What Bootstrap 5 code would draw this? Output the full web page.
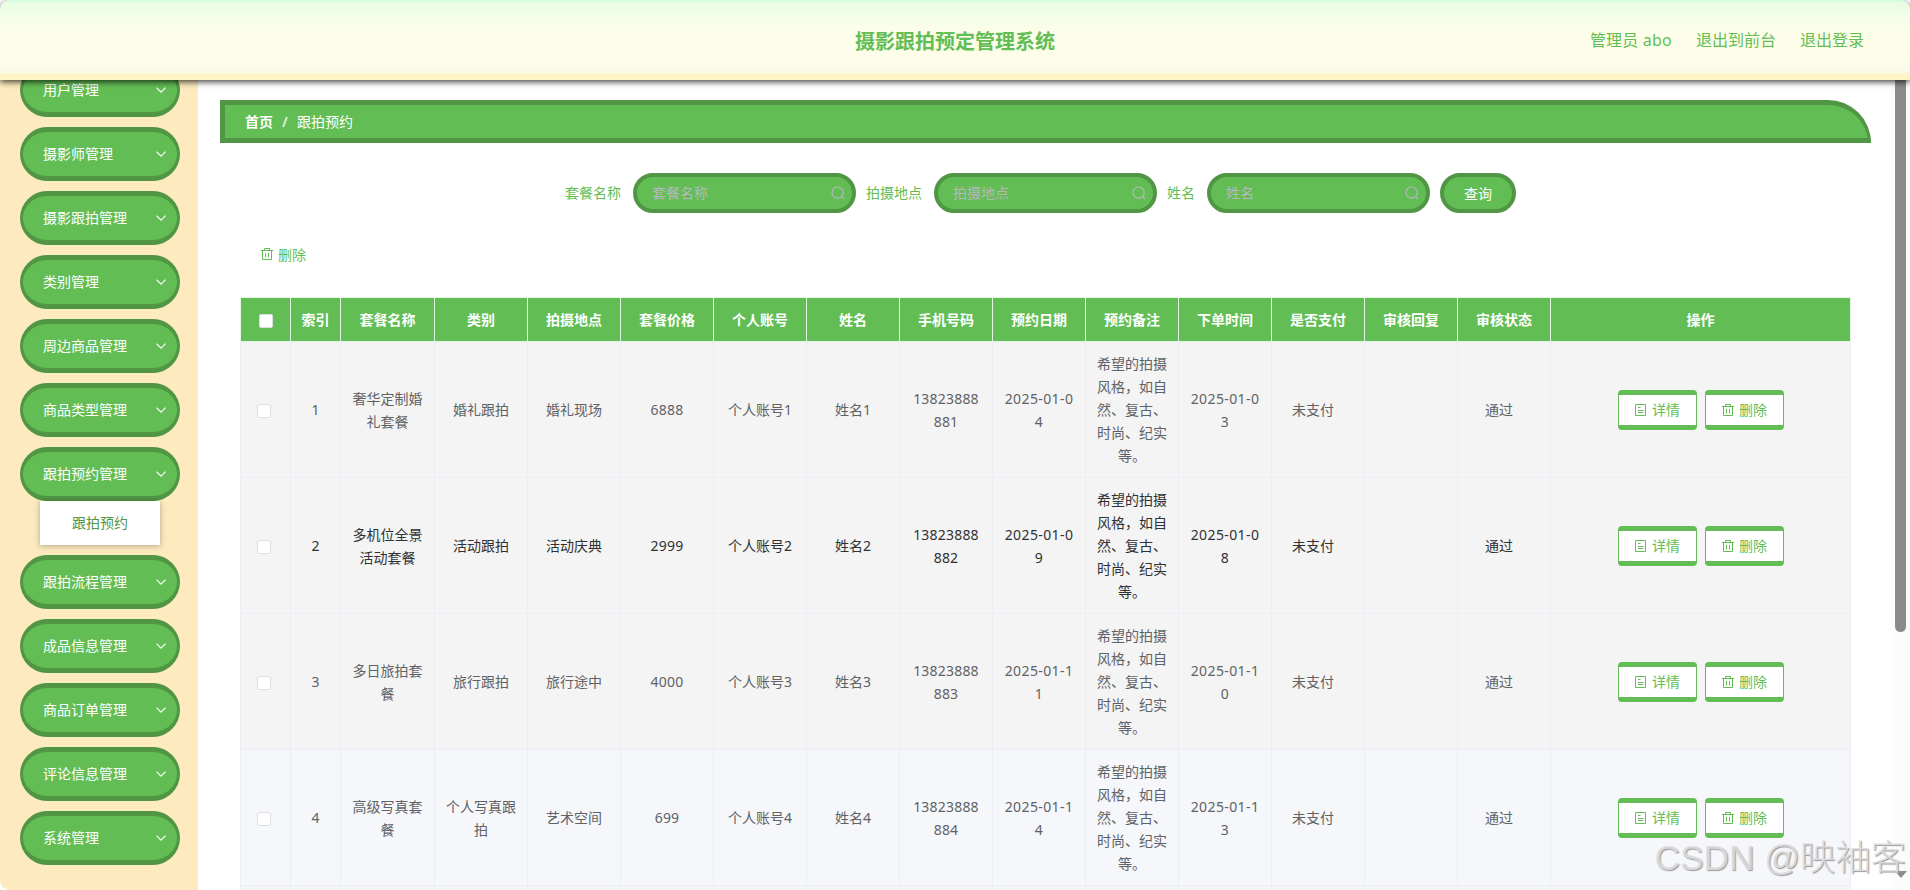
<!DOCTYPE html>
<html lang="zh-CN">
<head>
<meta charset="utf-8">
<title>摄影跟拍预定管理系统</title>
<link href="https://cdn.jsdelivr.net/npm/bootstrap@5.3.0/dist/css/bootstrap.min.css" rel="stylesheet">
<style>
:root{--g:#62be54;--d:#509644}
body{font:14px/1.5 "Noto Sans","Noto Sans CJK SC",sans-serif;color:#606266;height:890px;overflow:hidden;background:#fff}
.topbar{height:80px;z-index:5;border-bottom:7px solid #fdf5c6;border-radius:10px 10px 0 0;background:linear-gradient(#cffbdc 0,#e8fde2 3px,#f2fee8 14px,#fdfeea 32px,#fdfdea 62px,#f8fae9 73px);box-shadow:0 2px 6px rgba(0,0,0,.75);color:var(--g);font-size:16px;padding:5px 45px 0}
.topbar h1{font-size:20px;line-height:73px;font-weight:700}
.userlinks{gap:24px;top:0;right:46px;height:80px}
.userlinks .who{letter-spacing:.2px}
.side{width:198px;background:#fdeabf;padding:0 18px 0 20px;margin-top:-17px;border-radius:0 0 0 10px}
.pill{height:54px;margin-bottom:10px;border:solid var(--d);border-width:5px 3px;border-radius:30px;background:var(--g);color:#fff;padding:0 11px 0 20px;flex:none}
.pill span,.field span{padding-bottom:2px}
.pill.open{margin-bottom:0}
.sub{width:120px;height:44px;margin:0 auto 10px;padding-bottom:2px;background:#fff;color:var(--d);box-shadow:0 1px 6px rgba(0,0,0,.3);flex:none}
.crumb{margin:20px 39px 0 22px;height:43px;border:5px solid var(--d);border-right-width:3px;border-radius:0 43px 0 0;background:var(--g);color:#fff;padding-left:20px;width:1651px}
.crumb .sep{width:24px;text-align:center;font-weight:700;opacity:.75}
.filters{margin:30px 0 0 367px;height:40px;color:var(--g)}
.filters label{padding-bottom:2px}
.field{width:223px;height:40px;border:4px solid var(--d);border-radius:30px;background:var(--g);color:#b4b8bf;padding:0 7px 0 15px;margin:0 10px 0 12px}
.go{width:76px;height:40px;border:4px solid var(--d);border-radius:30px;background:var(--g);color:#fff}
.del{margin:30px 0 0 62px;height:22px;color:var(--g)}
.grid-t{margin:32px 0 0 42px;width:1611px;table-layout:fixed;border-collapse:collapse;text-align:center}
.grid-t th{height:44px;background:var(--g);color:#fff;border:1px solid #e4f6e4;padding:0}
.grid-t td{height:136px;background:#f4f4f4;border:1px solid #ebeef5;padding:0;line-height:23px}
.grid-t .dark td{color:#303133}
.grid-t .cool td{background:#f5f7fb}
.grid-t i{display:inline-block;width:14px;height:14px;background:#fff;border:1px solid #dcdfe6;border-radius:2px;vertical-align:middle}
.grid-t .off{padding-right:10px}
.grid-t .offc{padding-right:3px}
.num{letter-spacing:.2px}
.date{letter-spacing:.4px}
.act{width:79px;height:40px;border:solid var(--g);border-width:5px 1px;border-radius:4px;background:#fff;color:var(--g)}
.track{width:19px;background:#fcfcfc;padding-left:4px;border-radius:0 0 10px 0}
.thumb{width:11px;height:552px;background:#8b8b8b;border-radius:0 0 6px 6px}
.track svg{margin-top:239px}
.wm{right:4px;bottom:7px;font:300 35.300px/50px "Liberation Sans","Noto Sans CJK SC",sans-serif;color:rgba(222,222,225,.9);text-shadow:1px 1px 1px #999;white-space:nowrap;z-index:9}
</style>
<script src="https://cdn.jsdelivr.net/npm/bootstrap@5.3.0/dist/js/bootstrap.bundle.min.js"></script>
</head>
<body class="d-flex flex-column">
<svg class="d-none"><defs>
<symbol id="trash" viewBox="0 0 14 14" fill="none" stroke="currentColor"><path d="M.8 3.500h12.400M4.500 3.500v-2h5v2M2.500 3.500v9h9v-9M5.500 6v4.500M8.500 6v4.500"/></symbol>
<symbol id="doc" viewBox="0 0 14 14" fill="none" stroke="currentColor"><path d="M1.500 1.500h10v11h-10zM4 4.500h2.500M4 7.500h5.500M4 9.500h5.500"/></symbol>
<symbol id="mag" viewBox="0 0 14 14" fill="none" stroke="currentColor" stroke-width="1.200"><circle cx="6.600" cy="6.600" r="5.600"/><path d="M10.600 10.600l2.400 2.400"/></symbol>
<symbol id="down" viewBox="0 0 10 6" fill="none" stroke="currentColor"><path d="M.5.700L5 5.200L9.500.700" stroke-width="1.100"/></symbol>
</defs></svg>
<header class="topbar position-relative flex-shrink-0 text-center">
<h1 class="m-0">摄影跟拍预定管理系统</h1>
<nav class="userlinks position-absolute d-flex align-items-center"><span class="who">管理员 abo</span><span>退出到前台</span><span>退出登录</span></nav>
</header>
<div class="d-flex flex-grow-1" style="min-height:0">
<aside class="side d-flex flex-column flex-shrink-0" id="side"></aside>
<main class="flex-grow-1 overflow-hidden">
<div class="crumb d-flex align-items-center"><b>首页</b><span class="sep">/</span><span>跟拍预约</span></div>
<div class="filters d-flex align-items-center">
<label>套餐名称</label><div class="field d-flex align-items-center justify-content-between"><span>套餐名称</span><svg width="14" height="14"><use href="#mag"/></svg></div>
<label>拍摄地点</label><div class="field d-flex align-items-center justify-content-between"><span>拍摄地点</span><svg width="14" height="14"><use href="#mag"/></svg></div>
<label>姓名</label><div class="field d-flex align-items-center justify-content-between"><span>姓名</span><svg width="14" height="14"><use href="#mag"/></svg></div>
<div class="go d-flex align-items-center justify-content-center">查询</div>
</div>
<div class="del d-flex align-items-center gap-1"><svg width="14" height="14"><use href="#trash"/></svg>删除</div>
<table class="grid-t" id="tbl"></table>
</main>
<div class="track flex-shrink-0"><div class="thumb"></div><svg class="d-block" width="12" height="8"><path d="M0 0h12L6 7z" fill="#8b8b8b"/></svg></div>
</div>
<div class="wm position-absolute">CSDN @映袖客</div>
<script>
const menu=['用户管理','摄影师管理','摄影跟拍管理','类别管理','周边商品管理','商品类型管理','跟拍预约管理','跟拍流程管理','成品信息管理','商品订单管理','评论信息管理','系统管理'];
document.getElementById('side').innerHTML=menu.map((m,i)=>`<div class="pill ${i==6?'open':''} d-flex align-items-center justify-content-between"><span>${m}</span><svg width="10" height="6"><use href="#down"/></svg></div>`+(i==6?'<div class="sub d-flex align-items-center justify-content-center">跟拍预约</div>':'')).join('');
const cols=[50,50,94,...Array(12).fill(93),300];
const heads=['<i></i>','索引','套餐名称','类别','拍摄地点','套餐价格','个人账号','姓名','手机号码','预约日期','预约备注','下单时间','是否支付','审核回复','审核状态','操作'];
const rows=[['奢华定制婚<br>礼套餐','婚礼跟拍','婚礼现场','6888','4','3'],['多机位全景<br>活动套餐','活动跟拍','活动庆典','2999','9','8'],['多日旅拍套<br>餐','旅行跟拍','旅行途中','4000','1','0'],['高级写真套<br>餐','个人写真跟<br>拍','艺术空间','699','4','3']];
const btn=(ic,t)=>`<span class="act d-flex align-items-center justify-content-center gap-1"><svg width="14" height="14"><use href="#${ic}"/></svg>${t}</span>`;
document.getElementById('tbl').innerHTML='<colgroup>'+cols.map(c=>`<col style="width:${c}px">`).join('')+'</colgroup><thead><tr>'+heads.map(h=>`<th>${h}</th>`).join('')+'</tr></thead><tbody>'+
rows.map((r,i)=>{const n=i+1,p=i<2?'0':'1';
return `<tr class="${i==1?'dark':i==3?'cool':''}"><td class="offc"><i></i></td><td>${n}</td><td>${r[0]}</td><td>${r[1]}</td><td>${r[2]}</td><td class="num">${r[3]}</td><td>个人账号${n}</td><td>姓名${n}</td><td class="num">13823888<br>88${n}</td><td class="date">2025-01-${p}<br>${r[4]}</td><td>希望的拍摄<br>风格，如自<br>然、复古、<br>时尚、纪实<br>等。</td><td class="date">2025-01-${p}<br>${r[5]}</td><td class="off">未支付</td><td></td><td class="off">通过</td><td><div class="d-flex justify-content-center gap-2">${btn('doc','详情')}${btn('trash','删除')}</div></td></tr>`}).join('')+'<tr>'+'<td></td>'.repeat(16)+'</tr></tbody>';
</script>
</body>
</html>
